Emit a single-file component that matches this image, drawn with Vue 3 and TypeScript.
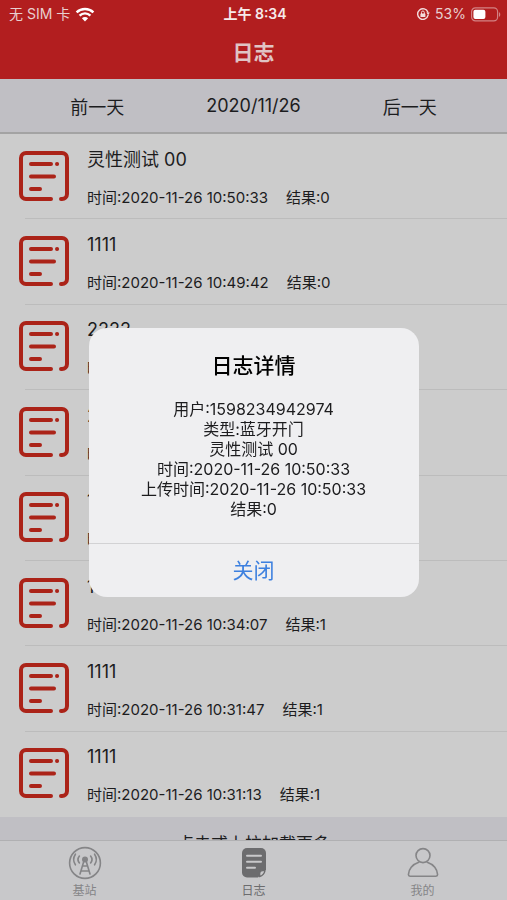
<script setup lang="ts">
import { ref } from 'vue'

interface LogEntry {
  id: number
  name: string
  time: string
  result: number
}

const logs: LogEntry[] = [
  { id: 1, name: '灵性测试 00', time: '2020-11-26 10:50:33', result: 0 },
  { id: 2, name: '1111', time: '2020-11-26 10:49:42', result: 0 },
  { id: 3, name: '2222', time: '2020-11-26 10:48:20', result: 0 },
  { id: 4, name: '2222', time: '2020-11-26 10:45:06', result: 0 },
  { id: 5, name: '1111', time: '2020-11-26 10:36:52', result: 1 },
  { id: 6, name: '1111', time: '2020-11-26 10:34:07', result: 1 },
  { id: 7, name: '1111', time: '2020-11-26 10:31:47', result: 1 },
  { id: 8, name: '1111', time: '2020-11-26 10:31:13', result: 1 },
]

const detail: string[] = [
  '用户:1598234942974',
  '类型:蓝牙开门',
  '灵性测试 00',
  '时间:2020-11-26 10:50:33',
  '上传时间:2020-11-26 10:50:33',
  '结果:0',
]

const open = ref(true)
</script>

<template>
  <div class="app">
    <header class="header">
      <div class="status">
        <div class="status-side">
          <span>无 SIM 卡</span>
          <svg class="wifi" viewBox="0 0 20 15" aria-hidden="true">
            <path d="M1.6 5.4a12 12 0 0 1 16.8 0" />
            <path d="M4.6 8.6a7.7 7.7 0 0 1 10.8 0" />
            <path class="solid" d="M10 14.4 6.9 11.3a4.4 4.4 0 0 1 6.2 0z" />
          </svg>
        </div>
        <span class="clock">上午 8:34</span>
        <div class="status-side end">
          <svg class="lock" viewBox="0 0 14 14" aria-hidden="true">
            <path d="M11.9 5.2a5.3 5.3 0 1 0 .2 3" />
            <path class="solid" d="M10.2 5.4h3.6L12.2 8z" />
            <rect class="solid" x="4.4" y="6.4" width="5" height="3.6" rx=".6" />
            <path class="thin" d="M5.5 6.6V5.4a1.4 1.4 0 0 1 2.8 0v1.2" />
          </svg>
          <span class="percent">53%</span>
          <svg class="battery" viewBox="0 0 30 15" aria-hidden="true">
            <rect class="shell" x=".6" y=".9" width="26" height="13" rx="3.8" />
            <rect class="charge" x="2.4" y="2.7" width="12" height="9.4" rx="2" />
            <path class="cap" d="M28 5.2c1.7.6 1.7 4 0 4.6z" />
          </svg>
        </div>
      </div>
      <h1>日志</h1>
    </header>

    <nav class="dates" aria-label="日期">
      <button type="button">前一天</button>
      <button type="button">2020/11/26</button>
      <button type="button">后一天</button>
    </nav>

    <main class="content">
      <ul class="list">
        <li v-for="log in logs" :key="log.id" class="row">
          <svg class="log-icon" viewBox="0 0 50 50" aria-hidden="true">
            <path d="M32 48H7a5 5 0 0 1-5-5V7a5 5 0 0 1 5-5h36a5 5 0 0 1 5 5v36a5 5 0 0 1-5 5h-1" />
            <path d="M12 13h20M38 13h.1M12 25.5h23M12 38h9" />
          </svg>
          <div class="row-text">
            <h2>{{ log.name }}</h2>
            <p>
              <span>时间:{{ log.time }}</span>
              <span>结果:{{ log.result }}</span>
            </p>
          </div>
        </li>
      </ul>
      <div class="more">点击或上拉加载更多</div>
    </main>

    <nav class="tabs" aria-label="主导航">
      <a href="#station">
        <svg viewBox="0 0 34 34" aria-hidden="true">
          <circle cx="17" cy="17" r="15.4" />
          <circle class="solid" cx="17" cy="13.4" r="2.2" />
          <path d="M16.2 14 12 28M17.8 14 22 28M14.6 20h4.8M13.2 25h7.6" />
          <path d="M11.4 10a5.6 5.6 0 0 0 0 7M22.6 10a5.6 5.6 0 0 1 0 7M7.4 8.2a9.6 9.6 0 0 0 0 10.6M26.6 8.2a9.6 9.6 0 0 1 0 10.6" />
        </svg>
        <span>基站</span>
      </a>
      <a href="#log" class="active" aria-current="page">
        <svg viewBox="0 0 34 34" aria-hidden="true">
          <path class="page" d="M10 2h14a5 5 0 0 1 5 5v16.5l-8 8H10a5 5 0 0 1-5-5V7a5 5 0 0 1 5-5z" />
          <path class="fold" d="M22.6 30.6v-3a3 3 0 0 1 3-3H28a8 8 0 0 1-5.4 6z" />
          <path class="cut" d="M10 9.8h14M10 15.8h14M10 21.8h8" />
        </svg>
        <span>日志</span>
      </a>
      <a href="#mine">
        <svg viewBox="0 0 34 34" aria-hidden="true">
          <circle cx="17" cy="9.6" r="7" />
          <path d="M12.8 16.2C6.2 18.2 2.6 23.6 2.4 28.6c0 1 .6 1.6 1.6 1.6h26c1 0 1.6-.6 1.6-1.6-.2-5-3.8-10.4-10.4-12.4" />
        </svg>
        <span>我的</span>
      </a>
    </nav>

    <div v-if="open" class="overlay">
      <section class="dialog" role="dialog" aria-modal="true" aria-labelledby="dialog-title">
        <h2 id="dialog-title">日志详情</h2>
        <div class="dialog-body">
          <p v-for="line in detail" :key="line">{{ line }}</p>
        </div>
        <button type="button" @click="open = false">关闭</button>
      </section>
    </div>
  </div>
</template>

<style>
body {
  background: #cccccc;
}
</style>

<style scoped>
.app {
  display: flex;
  flex-direction: column;
  min-height: 100vh;
  background: #cccccc;
  color: #1c1c1e;
  font-family: Inter, "Noto Sans CJK SC", sans-serif;
}

h1,
h2,
p,
ul {
  margin: 0;
  padding: 0;
  font-weight: 400;
}

button {
  padding: 0;
  border: 0;
  background: none;
  color: inherit;
  font: inherit;
  cursor: pointer;
}

svg {
  flex: none;
  fill: none;
  stroke-linecap: round;
  stroke-linejoin: round;
}

.header {
  background: #b21e1f;
  color: #e8cfcf;
}

.status {
  display: grid;
  grid-template-columns: 1fr auto 1fr;
  align-items: center;
  height: 28px;
  padding: 0 6px 0 9px;
  font-size: 14px;
  line-height: 20px;
}

.status-side {
  display: flex;
  align-items: center;
  gap: 5px;
}

.end {
  justify-content: flex-end;
}

.clock {
  color: #f6eaea;
  font-weight: 600;
}

.wifi {
  width: 20px;
  height: 15px;
  stroke: #ffffff;
  stroke-width: 2.4;
  stroke-linecap: butt;
}

.wifi .solid {
  fill: #ffffff;
  stroke: none;
}

.lock {
  width: 14px;
  height: 14px;
  stroke: #f3dede;
  stroke-width: 1.4;
}

.lock .solid {
  fill: #f3dede;
  stroke: none;
}

.lock .thin {
  stroke-width: 1;
}

.battery {
  width: 30px;
  height: 15px;
}

.battery .shell {
  stroke: #d38284;
  stroke-width: 1.2;
}

.battery .charge {
  fill: #ffffff;
}

.battery .cap {
  fill: #d38284;
}

h1 {
  height: 51px;
  color: #e0c4c4;
  font-size: 21px;
  font-weight: 600;
  line-height: 50px;
  text-align: center;
}

.dates {
  display: grid;
  grid-template-columns: repeat(3, 1fr);
  height: 53px;
  padding: 0 19px;
  border-bottom: 2px solid #a3a3a3;
  background: #c0bfc4;
  font-size: 18px;
}

.content {
  display: flex;
  flex: 1;
  flex-direction: column;
}

.list {
  display: flex;
  flex: 1;
  flex-direction: column;
  list-style: none;
}

.row {
  display: flex;
  flex: 1;
  align-items: center;
  gap: 18px;
  padding: 0 0 2px 19px;
  background: linear-gradient(#bcbcbc, #bcbcbc) 25px 100% / 100% 1px no-repeat;
}

.row:last-child {
  background: none;
}

.log-icon {
  width: 50px;
  height: 50px;
  stroke: #ab2318;
  stroke-width: 4;
}

.row-text {
  display: flex;
  flex-direction: column;
  gap: 14px;
  padding-top: 4px;
}

.row-text h2 {
  font-size: 18px;
  line-height: 26px;
}

.row-text p {
  display: flex;
  gap: 18px;
  font-size: 15px;
  line-height: 22px;
}

.more {
  height: 23px;
  overflow: hidden;
  background: #c0bfc4;
  font-size: 17px;
  line-height: 54px;
  text-align: center;
}

.tabs {
  display: grid;
  grid-template-columns: repeat(3, 1fr);
  border-top: 1px solid #b0b0b2;
  background: #c8c8ca;
}

.tabs a {
  display: flex;
  flex-direction: column;
  align-items: center;
  height: 59px;
  padding-top: 5px;
  box-sizing: border-box;
  gap: 2px;
  color: #858587;
  font-size: 12px;
  line-height: 18px;
  text-decoration: none;
}

.tabs svg {
  width: 34px;
  height: 34px;
  stroke: currentColor;
  stroke-width: 1.6;
}

.tabs .solid {
  fill: currentColor;
}

.tabs .active {
  color: #6c6c6e;
}

.tabs .page {
  fill: currentColor;
  stroke: none;
}

.tabs .cut {
  stroke: #c8c8ca;
  stroke-width: 2;
}

.tabs .fold {
  fill: #c8c8ca;
  stroke-width: 1.4;
}

.overlay {
  position: fixed;
  inset: 0;
  display: flex;
  align-items: center;
  justify-content: center;
  padding: 24px 24px 0;
}

.dialog {
  display: flex;
  flex-direction: column;
  width: 330px;
  overflow: hidden;
  border-radius: 18px;
  background: #efeff1;
  color: #1c1c1e;
  text-align: center;
}

.dialog h2 {
  padding-top: 22px;
  color: #000000;
  font-size: 21px;
  font-weight: 500;
  line-height: 32px;
}

.dialog-body {
  padding: 17px 16px 24px;
  font-size: 16px;
  line-height: 20px;
}

.dialog button {
  height: 54px;
  padding-bottom: 3px;
  border-top: 1px solid #d2d2d4;
  color: #3d80df;
  font-size: 21px;
}
</style>
